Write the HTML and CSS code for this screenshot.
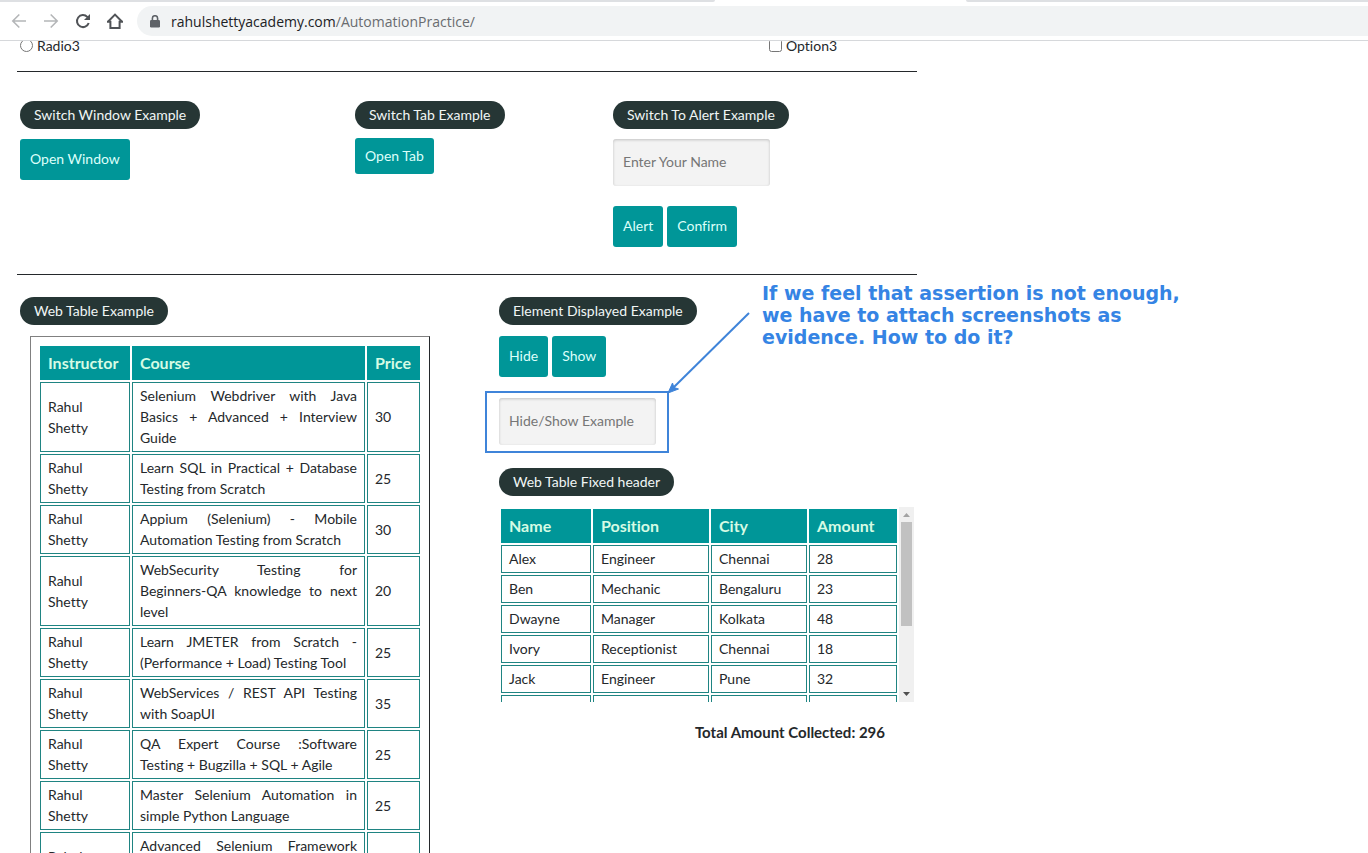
FILE: index.html
```
<!DOCTYPE html>
<html lang="en">
<head>
<meta charset="utf-8">
<title>Practice Page</title>
<link rel="stylesheet" href="styles.css">
</head>
<body>
<div class="window">
  <header class="browser">
    <div class="tabstrip"><span class="tab-edge tab-left"></span><span class="tab-edge tab-right"></span></div>
    <nav class="toolbar" aria-label="Browser">
      <button class="nav-btn off" type="button" aria-label="Back"><svg viewBox="0 0 16 16"><path d="M15 8H2M8.300 1.500 1.800 8l6.500 6.500"/></svg></button>
      <button class="nav-btn off" type="button" aria-label="Forward"><svg viewBox="0 0 16 16"><path d="M1 8h13M7.700 1.500 14.200 8l-6.500 6.500"/></svg></button>
      <button class="nav-btn" type="button" aria-label="Reload"><svg viewBox="0 0 16 16"><path class="bold" d="M13.700 10A6 6 0 1 1 12.300 3.900L14 5.600"/><path class="solid" d="M15 1v6H9z"/></svg></button>
      <button class="nav-btn" type="button" aria-label="Home"><svg viewBox="0 0 16 16"><path class="bold" d="M.6 9 8 1.600 15.400 9M0 8.700h3.400v6.300h9.200V8.700H16"/></svg></button>
      <div class="address">
        <svg class="lock" viewBox="0 0 10 13"><path class="solid" d="M1.200 5h7.600q1.200 0 1.200 1.200v5q0 1.200-1.200 1.200H1.200Q0 12.400 0 11.200v-5Q0 5 1.200 5z"/><path d="M2.400 5.500V3.300a2.600 2.600 0 0 1 5.200 0v2.200"/></svg>
        <span>rahulshettyacademy.com<span class="path">/AutomationPractice/</span></span>
      </div>
    </nav>
  </header>

  <main class="page">
    <div class="options">
      <label><input type="radio" name="radio"> Radio3</label>
      <label><input type="checkbox"> Option3</label>
    </div>

    <section class="row switches">
      <div>
        <h2 class="pill">Switch Window Example</h2>
        <div class="controls"><button class="btn" type="button">Open Window</button></div>
      </div>
      <div>
        <h2 class="pill">Switch Tab Example</h2>
        <div class="controls link"><a class="btn" href="#">Open Tab</a></div>
      </div>
      <div>
        <h2 class="pill">Switch To Alert Example</h2>
        <div class="controls"><input class="field" type="text" placeholder="Enter Your Name" aria-label="Enter Your Name"></div>
        <div class="controls after"><button class="btn" type="button">Alert</button><button class="btn" type="button">Confirm</button></div>
      </div>
    </section>

    <section class="row tables">
      <div>
        <h2 class="pill">Web Table Example</h2>
        <table class="data courses">
          <colgroup><col class="c90"><col><col class="c53"></colgroup>
          <thead><tr><th>Instructor</th><th>Course</th><th>Price</th></tr></thead>
          <tbody>
            <tr><td>Rahul Shetty</td><td>Selenium Webdriver with Java Basics + Advanced + Interview Guide</td><td>30</td></tr>
            <tr><td>Rahul Shetty</td><td>Learn SQL in Practical + Database Testing from Scratch</td><td>25</td></tr>
            <tr><td>Rahul Shetty</td><td>Appium (Selenium) - Mobile Automation Testing from Scratch</td><td>30</td></tr>
            <tr><td>Rahul Shetty</td><td>WebSecurity Testing for <span class="keep">Beginners-QA</span> knowledge to next level</td><td>20</td></tr>
            <tr><td>Rahul Shetty</td><td>Learn JMETER from Scratch - (Performance + Load) Testing Tool</td><td>25</td></tr>
            <tr><td>Rahul Shetty</td><td>WebServices / REST API Testing with SoapUI</td><td>35</td></tr>
            <tr><td>Rahul Shetty</td><td>QA Expert Course :Software Testing + Bugzilla + SQL + Agile</td><td>25</td></tr>
            <tr><td>Rahul Shetty</td><td>Master Selenium Automation in simple Python Language</td><td>25</td></tr>
            <tr><td>Rahul Shetty</td><td>Advanced Selenium Framework Pageobject, TestNG, Maven, Jenkins,C</td><td>20</td></tr>
          </tbody>
        </table>
      </div>
      <div>
        <h2 class="pill">Element Displayed Example</h2>
        <div class="controls wide"><button class="btn" type="button">Hide</button><button class="btn" type="button">Show</button></div>
        <div class="controls marked">
          <input class="field" type="text" placeholder="Hide/Show Example" aria-label="Hide/Show Example">
          <svg class="arrow" viewBox="0 0 86 86"><path class="line" d="M83 3 7 78"/><path class="head" d="M2 83 6.500 73l1.500 4.500 4.500 1.500z"/></svg>
          <p class="note">If we feel that assertion is not enough, we have to attach screenshots as evidence. How to do it?</p>
        </div>
        <h2 class="pill fixed-title">Web Table Fixed header</h2>
        <div class="scroller">
          <div class="clip">
            <table class="data people">
              <colgroup><col class="c90"><col class="c116"><col class="c96"><col></colgroup>
              <thead><tr><th>Name</th><th>Position</th><th>City</th><th>Amount</th></tr></thead>
              <tbody>
                <tr><td>Alex</td><td>Engineer</td><td>Chennai</td><td>28</td></tr>
                <tr><td>Ben</td><td>Mechanic</td><td>Bengaluru</td><td>23</td></tr>
                <tr><td>Dwayne</td><td>Manager</td><td>Kolkata</td><td>48</td></tr>
                <tr><td>Ivory</td><td>Receptionist</td><td>Chennai</td><td>18</td></tr>
                <tr><td>Jack</td><td>Engineer</td><td>Pune</td><td>32</td></tr>
                <tr><td>&nbsp;</td><td></td><td></td><td></td></tr>
              </tbody>
            </table>
          </div>
          <div class="bar">
            <svg viewBox="0 0 15 15"><path fill="#a3a3a3" d="M4 10h7L7.500 6z"/></svg>
            <div class="track"><div class="thumb"></div></div>
            <svg viewBox="0 0 15 15"><path fill="#505050" d="M4 5h7L7.500 9z"/></svg>
          </div>
        </div>
        <p class="total">Total Amount Collected: 296</p>
      </div>
    </section>
  </main>
</div>
</body>
</html>
```
FILE: styles.css
```
* { box-sizing: border-box; }
body {
  margin: 0;
  background: #fff;
  color: #24282b;
  font: 14px/21px Lato, sans-serif;
  font-variant-ligatures: none;
}
.window { height: 100vh; overflow: hidden; }
.browser {
  position: relative;
  z-index: 1;
  background: #fff;
  border-bottom: 1px solid #d6d8db;
}
.tabstrip { display: flex; justify-content: space-between; height: 2px; }
.tab-edge { background: #dee0e3; }
.tab-left { width: 715px; border-bottom-right-radius: 4px; }
.tab-right { width: 402px; border-bottom-left-radius: 4px; }
.toolbar { display: flex; align-items: center; gap: 16px; padding: 4px 0 4px 11px; }
.nav-btn { width: 16px; height: 16px; padding: 0; border: 0; background: none; color: #505357; }
.nav-btn svg, .lock { display: block; fill: none; stroke: currentColor; stroke-width: 1.600; }
.off { color: #b4b6b8; }
.nav-btn .bold { stroke-width: 2; }
.nav-btn .solid, .lock .solid { fill: currentColor; stroke: none; }
.address {
  display: flex;
  flex: 1;
  align-items: center;
  gap: 11px;
  height: 30px;
  margin-left: -2px;
  padding-left: 13px;
  border-radius: 15px 0 0 15px;
  background: #f1f3f4;
  color: #202124;
  font-family: "Open Sans", sans-serif;
}
.lock { width: 10px; height: 13px; color: #5f6368; }
.path { color: #696c70; }

.page { max-width: 900px; margin: -6px 0 0 17px; }
.options { display: grid; grid-template-columns: 749px 1fr; padding: 0 3px 15px; }
.options label { display: flex; align-items: center; gap: 4px; }
.options input { width: 13px; height: 13px; margin: 0; }
.row { display: grid; border-top: 1px solid #24282b; padding-left: 3px; }
.switches { grid-template-columns: 335px 258px 1fr; padding-top: 29px; padding-bottom: 27px; }
.tables { grid-template-columns: 479px 1fr; padding-top: 22px; }
.pill {
  width: fit-content;
  margin: 0;
  padding: 3px 14px 4px;
  border-radius: 14px;
  background: #263635;
  color: #f1f6f5;
  font-size: 14px;
  font-weight: 400;
}
.controls { display: flex; gap: 4px; margin-top: 10px; }
.link { margin-top: 9px; }
.wide { margin-top: 11px; }
.after { margin-top: 20px; }
.btn {
  padding: 9px 10px 11px;
  border: 0;
  border-radius: 3px;
  background: #009698;
  color: #dcfffa;
  font: inherit;
  text-decoration: none;
}
a.btn { padding: 7px 10px 8px; }
.field {
  width: 157px;
  height: 47px;
  padding: 0 10px 2px;
  border: 0;
  border-radius: 3px;
  background: #f3f3f3;
  box-shadow: inset 0 1px 3px rgba(0, 0, 0, 0.2);
  font: inherit;
}
.field::placeholder { color: #767676; opacity: 1; }

.data { table-layout: fixed; border-spacing: 2px; }
.data th {
  padding: 5px 7px;
  border: 1px solid #009698;
  background: #009698;
  color: #d6fbe4;
  font-size: 16px;
  font-weight: 700;
  line-height: 22px;
  text-align: left;
}
.data td { padding: 2px 7px 3px; border: 1px solid #1f8482; }
.courses {
  width: 400px;
  margin: 11px 0 0 10px;
  padding: 7px;
  border: 1px solid;
  border-color: #808080 #24282b #24282b #808080;
}
.courses td:nth-child(2) { text-align: justify; }
.keep { white-space: nowrap; }
.c53 { width: 53px; }
.c90 { width: 90px; }
.c96 { width: 96px; }
.c116 { width: 116px; }

.marked { position: relative; width: fit-content; margin-top: 21px; }
.marked::before {
  position: absolute;
  inset: -7px -13px -8px -14px;
  border: 2px solid #3f84d9;
  content: "";
}
.arrow { position: absolute; left: 167px; top: -88px; width: 86px; height: 86px; }
.arrow .line { stroke: #3f84d9; stroke-width: 2; }
.arrow .head { fill: #3f84d9; stroke: #3f84d9; stroke-width: 1; }
.note {
  position: absolute;
  left: 263px;
  top: -116px;
  width: 420px;
  margin: 0;
  color: #3584e4;
  font: bold 19px/22px "DejaVu Sans", sans-serif;
}
.fixed-title { margin-top: 23px; }
.scroller { display: flex; height: 195px; margin-top: 11px; width: 415px; }
.clip { flex: 1; overflow: hidden; }
.people { width: 100%; }
.bar { display: flex; flex-direction: column; width: 15px; background: #f0f0f0; }
.track { flex: 1; padding: 0 2px; }
.thumb { height: 104px; background: #c1c1c1; }
.total { width: 386px; margin: 20px 0 0; font-size: 15px; font-weight: 700; text-align: right; }
```
